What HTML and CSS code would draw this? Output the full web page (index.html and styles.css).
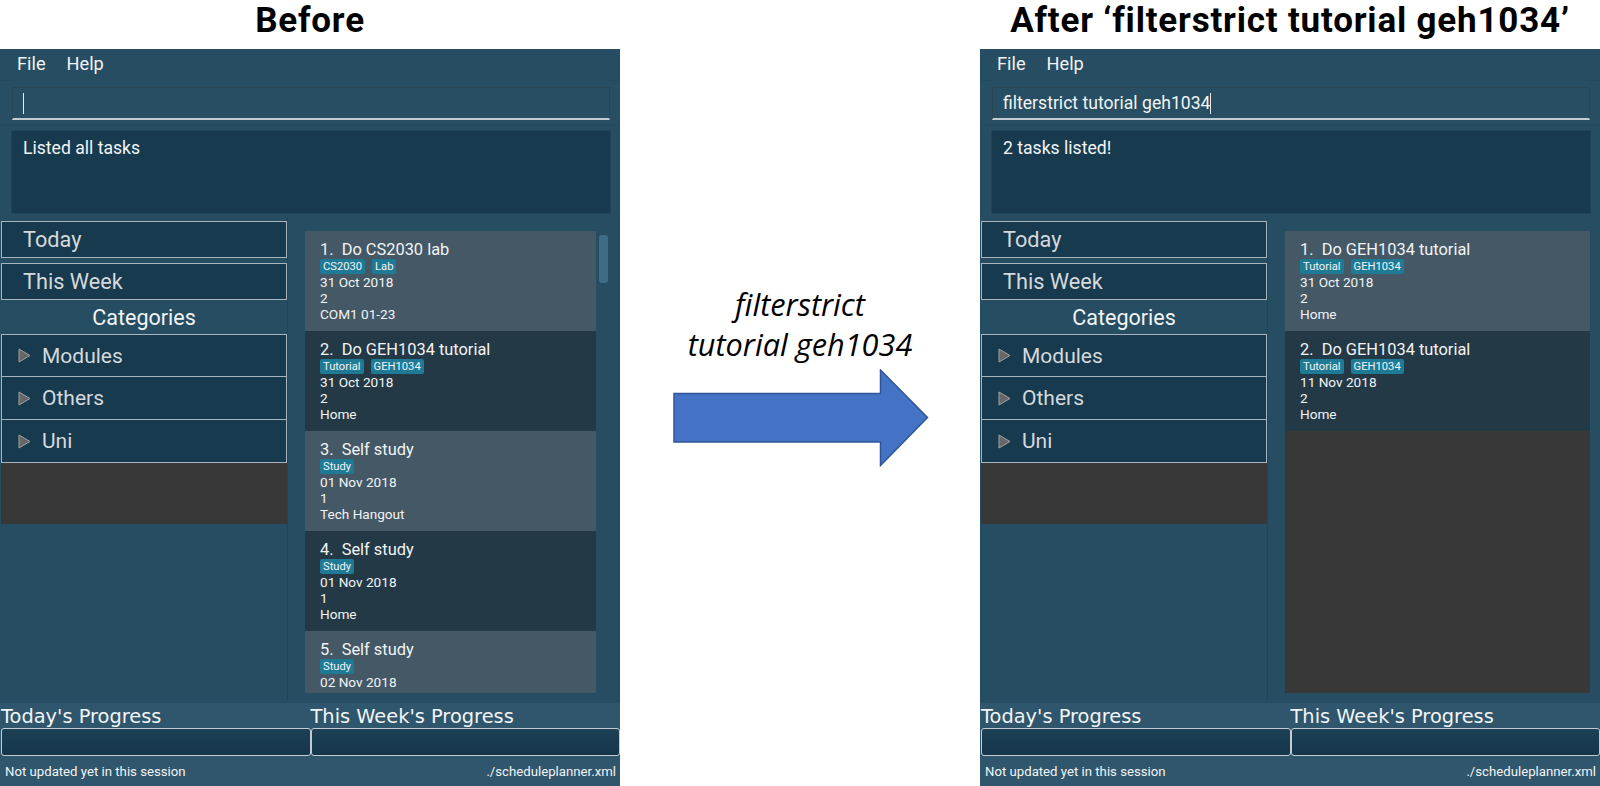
FILE: index.html
```html
<!DOCTYPE html>
<html lang="en">
<head>
    <meta charset="UTF-8">
    <title>Filterstrict command</title>
    <link rel="stylesheet" href="styles.css">
</head>
<body>
    <div class="figure">
        <section class="side">
            <h1 class="heading">Before</h1>
            <div class="window">
                <div class="menu"><span>File</span><span>Help</span></div>
                <div class="command">
                    <div class="input"><span class="caret"></span></div>
                </div>
                <div class="result">
                    <div class="result-box">Listed all tasks</div>
                </div>
                <div class="main">
                    <div class="sidebar">
                        <div class="side-btn">Today</div>
                        <div class="side-btn">This Week</div>
                        <div class="cat-title">Categories</div>
                        <div class="cat-list">
                            <div class="cat"><svg class="arrow" width="13" height="15" viewBox="0 0 13 15"><path d="M1 1L12 7.500L1 14Z"/></svg>Modules</div>
                            <div class="cat"><svg class="arrow" width="13" height="15" viewBox="0 0 13 15"><path d="M1 1L12 7.500L1 14Z"/></svg>Others</div>
                            <div class="cat"><svg class="arrow" width="13" height="15" viewBox="0 0 13 15"><path d="M1 1L12 7.500L1 14Z"/></svg>Uni</div>
                        </div>
                        <div class="cat-empty"></div>
                    </div>
                    <div class="tasks">
                        <div class="list">
                            <div class="card">
                                <div class="name">1.&nbsp; Do CS2030 lab</div>
                                <div class="tags"><span class="tag">CS2030</span><span class="tag">Lab</span></div>
                                <div>31 Oct 2018</div>
                                <div>2</div>
                                <div>COM1 01-23</div>
                            </div>
                            <div class="card">
                                <div class="name">2.&nbsp; Do GEH1034 tutorial</div>
                                <div class="tags"><span class="tag">Tutorial</span><span class="tag">GEH1034</span></div>
                                <div>31 Oct 2018</div>
                                <div>2</div>
                                <div>Home</div>
                            </div>
                            <div class="card">
                                <div class="name">3.&nbsp; Self study</div>
                                <div class="tags"><span class="tag">Study</span></div>
                                <div>01 Nov 2018</div>
                                <div>1</div>
                                <div>Tech Hangout</div>
                            </div>
                            <div class="card">
                                <div class="name">4.&nbsp; Self study</div>
                                <div class="tags"><span class="tag">Study</span></div>
                                <div>01 Nov 2018</div>
                                <div>1</div>
                                <div>Home</div>
                            </div>
                            <div class="card">
                                <div class="name">5.&nbsp; Self study</div>
                                <div class="tags"><span class="tag">Study</span></div>
                                <div>02 Nov 2018</div>
                            </div>
                        </div>
                        <div class="scrollbar"><div class="thumb"></div></div>
                    </div>
                </div>
                <div class="progress">
                    <div class="progress-col">
                        <div class="progress-label">Today's Progress</div>
                        <div class="bar"></div>
                    </div>
                    <div class="progress-col">
                        <div class="progress-label">This Week's Progress</div>
                        <div class="bar"></div>
                    </div>
                </div>
                <div class="status"><span>Not updated yet in this session</span><span>./scheduleplanner.xml</span></div>
            </div>
        </section>

        <section class="middle">
            <p class="cmd">filterstrict<br>tutorial geh1034</p>
            <svg class="big-arrow" width="256" height="98" viewBox="0 0 256 98">
                <path d="M1 24.500H207.500V1L254.500 48.500L207.500 96.500V73H1Z" fill="#4472c4" stroke="#2f5597" stroke-width="1.500"/>
            </svg>
        </section>

        <section class="side">
            <h1 class="heading">After ‘filterstrict tutorial geh1034’</h1>
            <div class="window">
                <div class="menu"><span>File</span><span>Help</span></div>
                <div class="command">
                    <div class="input">filterstrict tutorial geh1034<span class="caret"></span></div>
                </div>
                <div class="result">
                    <div class="result-box">2 tasks listed!</div>
                </div>
                <div class="main">
                    <div class="sidebar">
                        <div class="side-btn">Today</div>
                        <div class="side-btn">This Week</div>
                        <div class="cat-title">Categories</div>
                        <div class="cat-list">
                            <div class="cat"><svg class="arrow" width="13" height="15" viewBox="0 0 13 15"><path d="M1 1L12 7.500L1 14Z"/></svg>Modules</div>
                            <div class="cat"><svg class="arrow" width="13" height="15" viewBox="0 0 13 15"><path d="M1 1L12 7.500L1 14Z"/></svg>Others</div>
                            <div class="cat"><svg class="arrow" width="13" height="15" viewBox="0 0 13 15"><path d="M1 1L12 7.500L1 14Z"/></svg>Uni</div>
                        </div>
                        <div class="cat-empty"></div>
                    </div>
                    <div class="tasks">
                        <div class="list wide">
                            <div class="card">
                                <div class="name">1.&nbsp; Do GEH1034 tutorial</div>
                                <div class="tags"><span class="tag">Tutorial</span><span class="tag">GEH1034</span></div>
                                <div>31 Oct 2018</div>
                                <div>2</div>
                                <div>Home</div>
                            </div>
                            <div class="card">
                                <div class="name">2.&nbsp; Do GEH1034 tutorial</div>
                                <div class="tags"><span class="tag">Tutorial</span><span class="tag">GEH1034</span></div>
                                <div>11 Nov 2018</div>
                                <div>2</div>
                                <div>Home</div>
                            </div>
                        </div>
                    </div>
                </div>
                <div class="progress">
                    <div class="progress-col">
                        <div class="progress-label">Today's Progress</div>
                        <div class="bar"></div>
                    </div>
                    <div class="progress-col">
                        <div class="progress-label">This Week's Progress</div>
                        <div class="bar"></div>
                    </div>
                </div>
                <div class="status"><span>Not updated yet in this session</span><span>./scheduleplanner.xml</span></div>
            </div>
        </section>
    </div>
</body>
</html>
```
FILE: styles.css
```css
html, body {
    margin: 0;
    padding: 0;
    background: #fff;
}

.figure {
    display: grid;
    grid-template-columns: 620px 360px 620px;
    width: 1600px;
    height: 786px;
    overflow: hidden;
    font-family: Roboto, "Liberation Sans", sans-serif;
}

.side {
    display: flex;
    flex-direction: column;
}

.heading {
    height: 49px;
    margin: 0;
    font-family: Roboto, sans-serif;
    font-size: 35px;
    font-weight: 700;
    letter-spacing: 0.800px;
    line-height: 41px;
    text-align: center;
    color: #000;
    white-space: nowrap;
}

.window {
    display: flex;
    flex-direction: column;
    height: 737px;
    background: #264d62;
    color: #f2f4f5;
}

.menu {
    display: flex;
    gap: 21px;
    height: 31px;
    padding-left: 17px;
    font-size: 18.200px;
    line-height: 30px;
}

.command {
    height: 45px;
    padding: 6px 10px 0 12px;
    box-sizing: border-box;
    background: #274e63;
    border-top: 1px solid #234a5e;
    border-bottom: 1px solid #234a5e;
}

.input {
    display: flex;
    align-items: center;
    height: 33px;
    box-sizing: border-box;
    padding-left: 10px;
    border: 1px solid #2b4452;
    border-bottom: 2px solid #c3ccd2;
    font-size: 17.600px;
}

.caret {
    width: 1px;
    height: 21px;
    background: #e6eaec;
}

.result {
    height: 93px;
    padding: 6px 10px 5px 12px;
    box-sizing: border-box;
}

.result-box {
    height: 82px;
    box-sizing: border-box;
    padding: 7px 11px;
    background: #173a4f;
    outline: 1px solid #204559;
    font-size: 17.600px;
    line-height: 21px;
}

.main {
    display: flex;
    height: 483px;
}

.sidebar {
    display: flex;
    flex-direction: column;
    width: 288px;
    box-sizing: border-box;
    padding: 3px 0 0 1px;
    border-right: 1px solid #20455a;
}

.side-btn {
    height: 37px;
    margin-bottom: 5px;
    box-sizing: border-box;
    padding-left: 21px;
    background: #173a4f;
    border: 1px solid #a8b4bb;
    font-size: 21.700px;
    line-height: 35px;
    color: #d6d9db;
}

.side-btn + .side-btn {
    margin-bottom: 0;
}

.cat-title {
    height: 34px;
    font-size: 21.500px;
    line-height: 35px;
    text-align: center;
}

.cat-list {
    border: 1px solid #a8b4bb;
    background: #173a4f;
}

.cat {
    display: flex;
    align-items: center;
    height: 42px;
    padding-left: 16px;
    border-bottom: 1px solid #a8b4bb;
    font-size: 21px;
    color: #d6d9db;
}

.cat:first-child {
    height: 41px;
}

.cat:last-child {
    border-bottom: 0;
}

.arrow {
    margin-right: 11px;
    fill: #666;
    stroke: #a0a0a0;
    stroke-width: 1;
}

.cat-empty {
    height: 61px;
    background: #383838;
}

.tasks {
    display: flex;
    flex: 1;
    padding: 13px 0 8px 17px;
}

.list {
    width: 291px;
    overflow: hidden;
    background: #383838;
}

.list.wide {
    width: 305px;
}

.card {
    height: 100px;
    box-sizing: border-box;
    padding: 10px 15px 0;
    background: #445866;
    font-size: 13.600px;
    line-height: 16px;
}

.card:nth-child(even) {
    background: #243946;
}

.name {
    font-size: 16.400px;
    line-height: 17px;
}

.tags {
    display: flex;
    gap: 7px;
    height: 15px;
    padding-top: 1px;
    box-sizing: border-box;
    margin-bottom: 1px;
}

.tag {
    height: 15px;
    padding: 0 3px;
    background: #1f7a96;
    border-radius: 2px;
    font-size: 11.200px;
    line-height: 15px;
}

.scrollbar {
    width: 12px;
    padding: 4px 0 0 3px;
    box-sizing: border-box;
}

.thumb {
    width: 9px;
    height: 48px;
    background: #3f6c84;
    border-radius: 3px;
}

.progress {
    display: flex;
    height: 53px;
    margin-top: 2px;
    padding-left: 1px;
    background: #2f566c;
}

.progress-col {
    flex: 1;
    display: flex;
    flex-direction: column;
}

.progress-label {
    height: 25px;
    font-family: "DejaVu Sans", sans-serif;
    font-size: 19.400px;
    line-height: 27px;
}

.bar {
    height: 28px;
    box-sizing: border-box;
    background: linear-gradient(#1d4055, #15364a);
    border: 1px solid #c3ccd2;
    border-radius: 3px;
}

.status {
    display: flex;
    justify-content: space-between;
    align-items: center;
    height: 30px;
    padding: 0 4px 0 5px;
    background: #2f566c;
    font-size: 13.200px;
}

.middle {
    display: flex;
    flex-direction: column;
    align-items: center;
    padding-top: 284px;
}

.cmd {
    margin: 0 0 5px;
    font-family: "Open Sans", sans-serif;
    font-style: italic;
    font-size: 30.700px;
    line-height: 40px;
    text-align: center;
    color: #000;
}

.big-arrow {
    margin-left: 2px;
}
```
